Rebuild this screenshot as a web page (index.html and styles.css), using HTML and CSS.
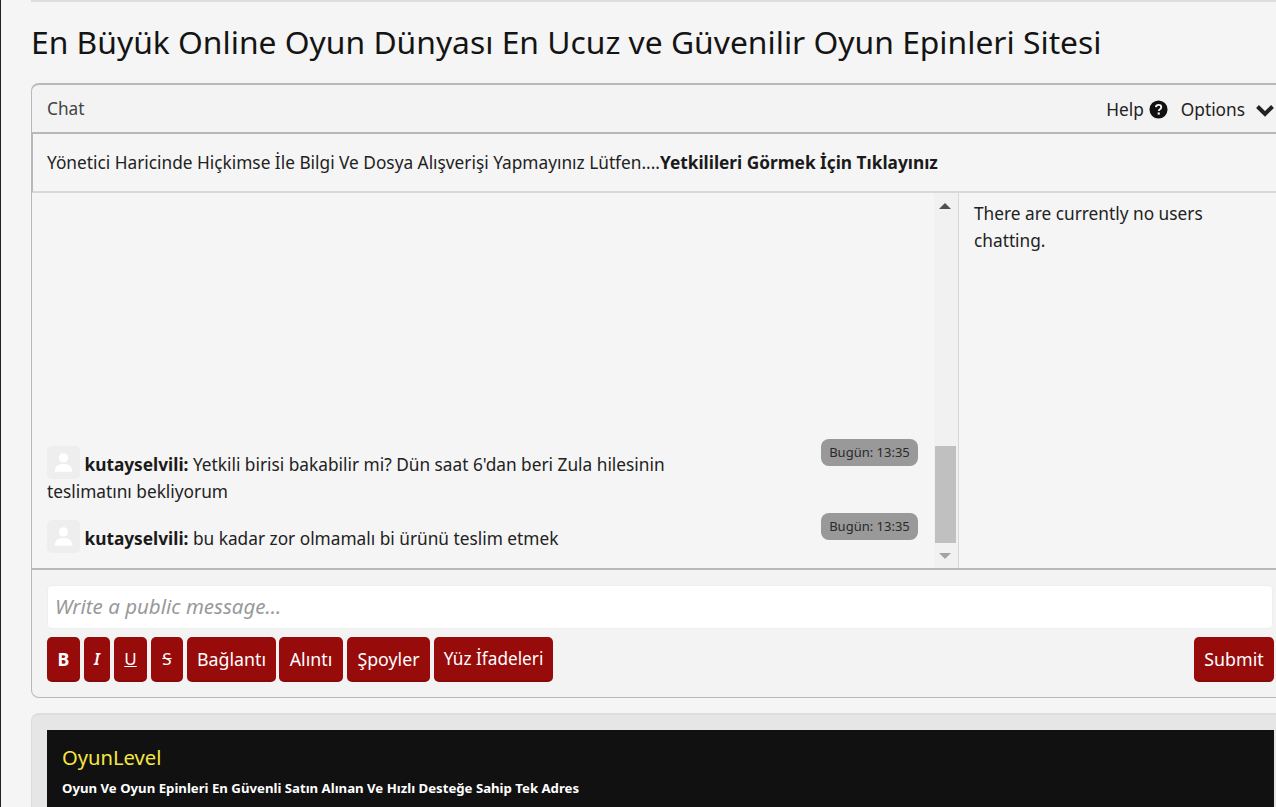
FILE: index.html
```html
<!DOCTYPE html>
<html lang="en">
<head>
    <meta charset="UTF-8">
    <meta name="viewport" content="width=device-width, initial-scale=1.0">
    <title>OyunLevel</title>
    <link rel="stylesheet" href="styles.css">
</head>
<body>
    <div class="page">
        <div class="prev-block"></div>
        <h1 class="page-title">En Büyük Online Oyun Dünyası En Ucuz ve Güvenilir Oyun Epinleri Sitesi</h1>

        <!-- Chat -->
        <div class="chat-block">
            <div class="chat-header">
                <span class="chat-title">Chat</span>
                <div class="chat-links">
                    <span class="chat-link">Help
                        <svg class="icon-help" viewBox="0 0 20 20"><circle cx="10" cy="10" r="9.5" fill="#111"/><path d="M7.2 7.6c.2-1.6 1.4-2.5 2.9-2.5 1.600 0 2.800 1 2.800 2.400 0 2.200-2.600 2.100-2.600 4.100" fill="none" stroke="#f4f4f4" stroke-width="2"/><rect x="9.100" y="13.100" width="2.300" height="2.300" fill="#f4f4f4"/></svg>
                    </span>
                    <span class="chat-link">Options
                        <svg class="icon-chevron" viewBox="0 0 20 14"><path d="M2.500 3.500 10 11l7.500-7.500" fill="none" stroke="#222" stroke-width="4"/></svg>
                    </span>
                </div>
            </div>
            <div class="chat-notice">Yönetici Haricinde Hiçkimse İle Bilgi Ve Dosya Alışverişi Yapmayınız Lütfen....<b>Yetkilileri Görmek İçin Tıklayınız</b></div>

            <div class="chat-main">
                <div class="chat-messages">
                    <div class="message">
                        <span class="time-badge">Bugün: 13:35</span>
                        <span class="avatar"><svg viewBox="0 0 32 32"><circle cx="16" cy="11.500" r="4.500" fill="#fff"/><path d="M7.500 25c0-5.500 3.500-7.500 8.500-7.500s8.500 2 8.500 7.500z" fill="#fff"/></svg></span>
                        <b>kutayselvili:</b> Yetkili birisi bakabilir mi? Dün saat 6'dan beri Zula hilesinin teslimatını bekliyorum
                    </div>
                    <div class="message">
                        <span class="time-badge">Bugün: 13:35</span>
                        <span class="avatar"><svg viewBox="0 0 32 32"><circle cx="16" cy="11.500" r="4.500" fill="#fff"/><path d="M7.500 25c0-5.500 3.500-7.500 8.500-7.500s8.500 2 8.500 7.500z" fill="#fff"/></svg></span>
                        <b>kutayselvili:</b> bu kadar zor olmamalı bi ürünü teslim etmek
                    </div>
                </div>
                <div class="scrollbar">
                    <span class="arrow-up"></span>
                    <span class="scroll-thumb"></span>
                    <span class="arrow-down"></span>
                </div>
                <div class="chat-users">There are currently no users chatting.</div>
            </div>

            <div class="chat-form">
                <div class="message-input">Write a public message...</div>
                <div class="toolbar">
                    <button class="btn btn-bold">B</button>
                    <button class="btn btn-italic">I</button>
                    <button class="btn btn-under">U</button>
                    <button class="btn btn-strike">S</button>
                    <button class="btn btn-link">Bağlantı</button>
                    <button class="btn btn-quote">Alıntı</button>
                    <button class="btn btn-spoiler">Şpoyler</button>
                    <button class="btn btn-smiley">Yüz İfadeleri</button>
                    <button class="btn btn-submit">Submit</button>
                </div>
            </div>
        </div>

        <!-- Site info -->
        <div class="info-block">
            <div class="info-inner">
                <div class="info-title">OyunLevel</div>
                <div class="info-text">Oyun Ve Oyun Epinleri En Güvenli Satın Alınan Ve Hızlı Desteğe Sahip Tek Adres</div>
            </div>
        </div>
    </div>
</body>
</html>
```

FILE: styles.css
```css
/* Global Styles */
html, body {
    height: 807px;
    overflow: hidden;
}

body {
    margin: 0;
    background-color: #f5f5f5;
    border-left: 1px solid #222;
    font-family: 'Noto Sans', 'Lato', sans-serif;
    font-size: 17.27px;
    color: #222;
}

.page {
    box-sizing: border-box;
    width: 1290px;
    padding-left: 30px;
}

.prev-block {
    height: 2px;
    margin-bottom: 20px;
    background: #ddd;
}

.page-title {
    margin: 0 0 19px;
    height: 42px;
    font-size: 31.8px;
    line-height: 40px;
    font-weight: 400;
    color: #141414;
}

/* Chat */
.chat-block {
    border-top: 2px solid #b8b8b8;
    border-left: 1px solid #b8b8b8;
    border-bottom: 1px solid #b8b8b8;
    border-radius: 8px 0 0 8px;
    background: #f3f3f3;
}

.chat-header {
    display: flex;
    justify-content: space-between;
    height: 47px;
    border-bottom: 2px solid #b8b8b8;
    padding-left: 15px;
    padding-right: 16px;
    line-height: 47px;
}

.chat-title {
    color: #444;
}

.chat-links {
    display: flex;
    gap: 13px;
    padding-top: 2px;
    white-space: nowrap;
}

.chat-link {
    display: flex;
    align-items: center;
    gap: 5px;
}

.icon-help {
    width: 19px;
    height: 19px;
}

.icon-chevron {
    width: 20px;
    height: 14px;
    margin-left: 5px;
}

.chat-notice {
    height: 57px;
    border-bottom: 2px solid #d8d8d8;
    border-left: 1px solid #b8b8b8;
    padding-left: 14px;
    line-height: 57px;
    background: #f5f5f5;
}

.chat-notice b,
.message b {
    font-weight: 700;
    color: #1a1a1a;
}

.chat-main {
    display: flex;
    height: 375px;
    border-bottom: 2px solid #b8b8b8;
    background: #f5f5f5;
}

.chat-messages {
    display: flex;
    flex-direction: column;
    justify-content: flex-end;
    box-sizing: border-box;
    width: 902px;
    padding: 0 16px 16px 15px;
    line-height: 27px;
}

.message {
    margin-top: 20px;
    width: 640px;
    position: relative;
}

.avatar {
    display: inline-block;
    width: 33px;
    height: 33px;
    margin: -12px 0 -4px;
    vertical-align: middle;
    border-radius: 5px;
    background: #eee;
}

.avatar svg {
    display: block;
    width: 100%;
    height: 100%;
}

/* Badge sits over the message row */
.time-badge {
    position: absolute;
    top: -12px;
    left: 774px;
    width: 97px;
    height: 27px;
    border-radius: 8px;
    background: #999;
    font-size: 13px;
    line-height: 27px;
    text-align: center;
    color: #2a2a2a;
}

.scrollbar {
    display: flex;
    flex-direction: column;
    align-items: center;
    width: 22px;
    padding: 10px 2px 0 0;
    background: #f1f1f1;
    border-right: 1px solid #d8d8d8;
}

.arrow-up {
    border-left: 6px solid transparent;
    border-right: 6px solid transparent;
    border-bottom: 6px solid #505050;
}

.scroll-thumb {
    width: 21px;
    height: 97px;
    margin-top: 237px;
    background: #c0c0c0;
}

.arrow-down {
    margin-top: 10px;
    border-left: 6px solid transparent;
    border-right: 6px solid transparent;
    border-top: 6px solid #a3a3a3;
}

.chat-users {
    width: 270px;
    padding: 7px 15px;
    line-height: 27px;
}

/* Form */
.chat-form {
    height: 127px;
    padding: 15px 0 0 15px;
    box-sizing: border-box;
}

.message-input {
    box-sizing: border-box;
    width: 1226px;
    height: 44px;
    padding-left: 7px;
    border-radius: 4px;
    background: #fff;
    border: 1px solid #eee;
    font-style: italic;
    font-size: 20.5px;
    line-height: 40px;
    color: #999;
}

.toolbar {
    display: flex;
    gap: 4px;
    width: 1227px;
    margin-top: 8px;
}

.btn {
    height: 45px;
    padding: 0;
    border: 0;
    border-bottom: 2px solid #8a0808;
    border-radius: 5px;
    background: #970b0b;
    color: #fff;
    font-family: inherit;
    font-size: 17.8px;
}

.btn-bold {
    width: 33px;
    font-weight: 700;
}

.btn-italic {
    width: 26px;
    font-size: 16px;
    font-style: italic;
    font-weight: 600;
}

.btn-under {
    width: 33px;
    font-size: 17px;
    text-decoration: underline;
}

.btn-strike {
    width: 32px;
    font-size: 17px;
    text-decoration: line-through;
}

.btn-link {
    width: 89px;
}

.btn-quote {
    width: 64px;
    margin-left: -1px;
}

.btn-spoiler {
    width: 83px;
}

.btn-smiley {
    width: 119px;
    font-size: 17.2px;
}

.btn-submit {
    width: 80px;
    margin-left: auto;
}

/* Site info */
.info-block {
    margin-top: 15px;
    height: 120px;
    padding: 15px 0 0 15px;
    border-top: 2px solid #ddd;
    border-left: 1px solid #ddd;
    border-radius: 8px 0 0 0;
    background: #e6e6e6;
}

.info-inner {
    box-sizing: border-box;
    width: 1227px;
    height: 100px;
    padding: 15px;
    background: #111;
}

.info-title {
    font-size: 20.2px;
    line-height: 24px;
    color: #f5e642;
}

.info-text {
    margin-top: 10px;
    font-size: 13.2px;
    font-weight: 700;
    color: #fff;
}
```
